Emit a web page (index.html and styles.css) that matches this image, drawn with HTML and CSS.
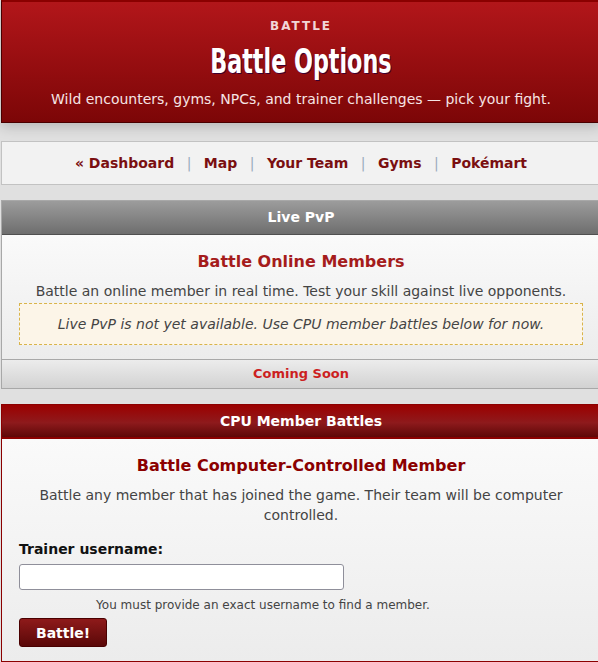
FILE: index.html
```html
<!DOCTYPE html>
<html lang="en">

<head>
    <meta charset="UTF-8">
    <meta name="viewport" content="width=device-width, initial-scale=1.0">
    <title>Battle Options</title>
    <link rel="stylesheet" href="styles.css">
</head>

<body>
    <div class="page">
        <header class="hero">
            <div class="eyebrow">BATTLE</div>
            <h1><span>Battle Options</span></h1>
            <p class="lead">Wild encounters, gyms, NPCs, and trainer challenges — pick your fight.</p>
        </header>

        <nav class="subnav">
            <a href="#">&laquo; Dashboard</a>
            <span class="sep">|</span>
            <a href="#">Map</a>
            <span class="sep">|</span>
            <a href="#">Your Team</a>
            <span class="sep">|</span>
            <a href="#">Gyms</a>
            <span class="sep">|</span>
            <a href="#">Pokémart</a>
        </nav>

        <section class="panel panel-gray">
            <div class="panel-head">Live PvP</div>
            <div class="panel-body">
                <h2>Battle Online Members</h2>
                <p>Battle an online member in real time. Test your skill against live opponents.</p>
                <div class="notice">Live PvP is not yet available. Use CPU member battles below for now.</div>
            </div>
            <div class="panel-foot">Coming Soon</div>
        </section>

        <section class="panel panel-red">
            <div class="panel-head">CPU Member Battles</div>
            <div class="panel-body">
                <h2>Battle Computer-Controlled Member</h2>
                <p>Battle any member that has joined the game. Their team will be computer controlled.</p>
                <form class="battle-form">
                    <label for="trainer">Trainer username:</label>
                    <input type="text" id="trainer" name="trainer">
                    <div class="help">You must provide an exact username to find a member.</div>
                    <button type="button">Battle!</button>
                </form>
            </div>
        </section>
    </div>
</body>

</html>
```

FILE: styles.css
```css
html {
    overflow-x: hidden;
}

body {
    font-family: Tahoma, "DejaVu Sans", sans-serif;
    font-size: 14px;
    background-color: #e0e0e0;
    color: #333333;
    margin: 0;
    padding: 0;
}

.page {
    width: 600px;
    margin-left: 1px;
}

/* header */
.hero {
    background: linear-gradient(to bottom, #b2161a, #7c0607);
    border: 1px solid #4a0000;
    border-top: 2px solid #8a0000;
    padding: 16px 20px 14px;
    text-align: center;
    box-shadow: 0 4px 12px rgba(0, 0, 0, 0.18);
}

.eyebrow {
    color: #f2d6d8;
    font-size: 12px;
    font-weight: bold;
    letter-spacing: 2px;
    line-height: 16px;
}

.hero h1 {
    margin: 10px 0 0;
    font-family: Impact, "DejaVu Sans Condensed", sans-serif;
    font-size: 33px;
    font-weight: 900;
    line-height: 36px;
    color: #ffffff;
    text-shadow: 1px 1px 0 #3a0030;
}

.hero h1 span {
    display: inline-block;
    transform: scale(0.75, 1);
}

.lead {
    margin: 10px 0 0;
    color: #f6e4e4;
    font-size: 14px;
    line-height: 18px;
}

/* sub navigation */
.subnav {
    margin-top: 18px;
    background-color: #f2f2f2;
    border: 1px solid #c2c2c2;
    padding: 12px 0;
    text-align: center;
    line-height: 18px;
}

.subnav a {
    color: #7a0f10;
    font-size: 14px;
    font-weight: bold;
    text-decoration: none;
}

.subnav .sep {
    color: #9aabbd;
    margin: 0 8px;
}

/* panels */
.panel {
    margin-top: 15px;
    border: 1px solid #a8a8a8;
    text-align: center;
}

.panel-head {
    color: #ffffff;
    font-weight: bold;
    font-size: 14px;
    line-height: 33px;
}

.panel-gray .panel-head {
    background: linear-gradient(to bottom, #9c9c9c, #6e6e6e);
    border-bottom: 1px solid #505050;
}

.panel-red {
    border-color: #8b0000;
}

.panel-red .panel-head {
    background: linear-gradient(to bottom, #9c0000 0%, #8e1a1c 55%, #5e0808 100%);
    border-bottom: 2px solid #8b0000;
    line-height: 32px;
}

.panel-body {
    background: linear-gradient(to bottom, #fafafa, #ececec);
    padding: 16px 17px 14px;
}

.panel h2 {
    margin: 0 0 8px;
    font-size: 16px;
    line-height: 22px;
    color: #a51c1c;
}

.panel-red h2 {
    color: #8b0000;
}

.panel p {
    margin: 0;
    line-height: 20px;
    color: #444444;
}

.notice {
    margin-top: 2px;
    padding: 10px;
    line-height: 20px;
    background-color: #fcf5e8;
    border: 1px dashed #d9b44a;
    font-style: italic;
    color: #444444;
}

.panel-foot {
    background: linear-gradient(to bottom, #ececec, #d2d2d2);
    border-top: 1px solid #a8a8a8;
    color: #cc1f1f;
    font-weight: bold;
    font-size: 13px;
    line-height: 28px;
}

/* form */
.battle-form {
    width: 488px;
    text-align: left;
    margin-top: 14px;
}

.battle-form label {
    display: block;
    font-weight: bold;
    color: #111111;
    line-height: 20px;
    margin-bottom: 5px;
}

.battle-form input {
    width: 325px;
    height: 26px;
    box-sizing: border-box;
    border: 1px solid #8f8f9a;
    border-radius: 3px;
    background-color: #ffffff;
    display: block;
}

.help {
    margin-top: 5px;
    text-align: center;
    font-size: 12px;
    line-height: 20px;
    color: #444444;
}

.battle-form button {
    margin-top: 3px;
    height: 29px;
    padding: 0 16px;
    background: linear-gradient(to bottom, #8e1a1a, #5a0808);
    color: #ffffff;
    font-family: inherit;
    font-size: 14px;
    font-weight: bold;
    border: 1px solid #4a0000;
    border-radius: 3px;
    cursor: pointer;
}
```
